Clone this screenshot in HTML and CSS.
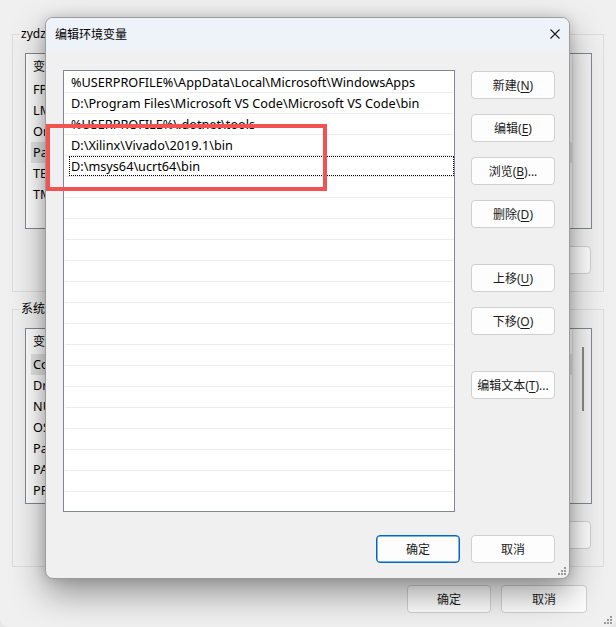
FILE: index.html
```html
<!DOCTYPE html>
<html lang="zh-CN">
<head>
    <meta charset="UTF-8">
    <title>环境变量</title>
    <link rel="stylesheet" href="styles.css">
</head>
<body>
    <div class="window">
        <fieldset class="group">
            <legend>zydz 的用户变量(<u>U</u>)</legend>
            <div class="var-list">
                <div class="var-body">
                    <div class="var-head"><span class="col-name">变量</span><span class="col-value">值</span></div>
                    <div class="var-row"><span class="col-name">FPGA_HOME</span><span class="col-value">D:\Xilinx</span></div>
                    <div class="var-row"><span class="col-name">LM_LICENSE_FILE</span><span class="col-value">D:\Xilinx\license.lic</span></div>
                    <div class="var-row"><span class="col-name">OneDrive</span><span class="col-value">C:\Users\zydz\OneDrive</span></div>
                    <div class="var-row selected"><span class="col-name">Path</span><span class="col-value">%USERPROFILE%\AppData\Local\Microsoft\WindowsApps;D:\Program Files</span></div>
                    <div class="var-row"><span class="col-name">TEMP</span><span class="col-value">%USERPROFILE%\AppData\Local\Temp</span></div>
                    <div class="var-row"><span class="col-name">TMP</span><span class="col-value">%USERPROFILE%\AppData\Local\Temp</span></div>
                </div>
                <div class="scrollbar"></div>
            </div>
            <div class="group-buttons">
                <button class="btn">新建(<u>N</u>)...</button>
                <button class="btn">编辑(<u>E</u>)...</button>
                <button class="btn">删除(<u>D</u>)</button>
            </div>
        </fieldset>

        <fieldset class="group group-system">
            <legend>系统变量(<u>S</u>)</legend>
            <div class="var-list">
                <div class="var-body">
                    <div class="var-head"><span class="col-name">变量</span><span class="col-value">值</span></div>
                    <div class="var-row selected"><span class="col-name">ComSpec</span><span class="col-value">C:\Windows\system32\cmd.exe</span></div>
                    <div class="var-row"><span class="col-name">DriverData</span><span class="col-value">C:\Windows\System32\Drivers\DriverData</span></div>
                    <div class="var-row"><span class="col-name">NUMBER_OF_PROCESSORS</span><span class="col-value">16</span></div>
                    <div class="var-row"><span class="col-name">OS</span><span class="col-value">Windows_NT</span></div>
                    <div class="var-row"><span class="col-name">Path</span><span class="col-value">C:\Windows\system32;C:\Windows;</span></div>
                    <div class="var-row"><span class="col-name">PATHEXT</span><span class="col-value">.COM;.EXE;.BAT;.CMD;.VBS;.VBE;.JS</span></div>
                    <div class="var-row"><span class="col-name">PROCESSOR_ARCHITECTURE</span><span class="col-value">AMD64</span></div>
                </div>
                <div class="scrollbar"><div class="thumb"></div></div>
            </div>
            <div class="group-buttons">
                <button class="btn">新建(<u>W</u>)...</button>
                <button class="btn">编辑(<u>I</u>)...</button>
                <button class="btn">删除(<u>L</u>)</button>
            </div>
        </fieldset>

        <div class="window-buttons">
            <button class="btn">确定</button>
            <button class="btn btn-wide">取消</button>
        </div>
        <svg class="grip grip-window" width="9" height="9" viewBox="0 0 9 9">
            <rect x="6" y="0" width="2" height="2"/>
            <rect x="3" y="3" width="2" height="2"/><rect x="6" y="3" width="2" height="2"/>
            <rect x="0" y="6" width="2" height="2"/><rect x="3" y="6" width="2" height="2"/><rect x="6" y="6" width="2" height="2"/>
        </svg>

        <div class="dialog">
            <div class="dialog-title">
                <span>编辑环境变量</span>
                <svg class="close-icon" width="10" height="10" viewBox="0 0 10 10">
                    <path d="M0.5 0.5 L9.5 9.5 M9.5 0.5 L0.5 9.5" stroke="#1a1a1a" stroke-width="1.1" fill="none"/>
                </svg>
            </div>
            <div class="dialog-body">
                <div class="path-list">
                    <div class="path-row"><div class="path-cell">%USERPROFILE%\AppData\Local\Microsoft\WindowsApps</div></div>
                    <div class="path-row"><div class="path-cell">D:\Program Files\Microsoft VS Code\Microsoft VS Code\bin</div></div>
                    <div class="path-row"><div class="path-cell">%USERPROFILE%\.dotnet\tools</div></div>
                    <div class="path-row"><div class="path-cell">D:\Xilinx\Vivado\2019.1\bin</div></div>
                    <div class="path-row"><div class="path-cell focused">D:\msys64\ucrt64\bin</div></div>
                    <div class="path-row"></div>
                    <div class="path-row"></div>
                    <div class="path-row"></div>
                    <div class="path-row"></div>
                    <div class="path-row"></div>
                    <div class="path-row"></div>
                    <div class="path-row"></div>
                    <div class="path-row"></div>
                    <div class="path-row"></div>
                    <div class="path-row"></div>
                    <div class="path-row"></div>
                    <div class="path-row"></div>
                    <div class="path-row"></div>
                    <div class="path-row"></div>
                    <div class="path-row"></div>
                    <div class="path-row"></div>
                </div>
                <div class="side-buttons">
                    <button class="btn">新建(<u>N</u>)</button>
                    <button class="btn">编辑(<u>E</u>)</button>
                    <button class="btn">浏览(<u>B</u>)...</button>
                    <button class="btn">删除(<u>D</u>)</button>
                    <button class="btn spaced">上移(<u>U</u>)</button>
                    <button class="btn">下移(<u>O</u>)</button>
                    <button class="btn spaced">编辑文本(<u>T</u>)...</button>
                </div>
            </div>
            <div class="dialog-footer">
                <button class="btn btn-default">确定</button>
                <button class="btn">取消</button>
            </div>
            <svg class="grip grip-dialog" width="9" height="9" viewBox="0 0 9 9">
                <rect x="6" y="0" width="2" height="2"/>
                <rect x="3" y="3" width="2" height="2"/><rect x="6" y="3" width="2" height="2"/>
                <rect x="0" y="6" width="2" height="2"/><rect x="3" y="6" width="2" height="2"/><rect x="6" y="6" width="2" height="2"/>
            </svg>
        </div>

        <div class="highlight-box"></div>
    </div>
</body>
</html>
```

FILE: styles.css
```css
* {
    box-sizing: border-box;
    margin: 0;
    padding: 0;
}

body {
    font-family: "Noto Sans", "Noto Sans CJK SC", sans-serif;
    font-size: 12px;
    color: #000;
    background: #e6e6e6;
    overflow: hidden;
}

.window {
    position: relative;
    width: 616px;
    height: 627px;
    background: #f0f0f0;
    padding: 26px 12px 0 12px;
    border-radius: 0 0 8px 8px;
}

/* background window: group boxes */
.group {
    border: 1px solid #dcdcdc;
    width: 592px;
    min-width: 0;
    padding: 11px 11px 17px 12px;
}

.group legend {
    line-height: 16px;
    padding: 0 2px;
    margin-left: -6px;
}

.group-system {
    margin-top: 9px;
}

.var-list {
    display: flex;
    height: 176px;
    border: 1px solid #828790;
    background: #fff;
    overflow: hidden;
}

.var-body {
    flex: 1;
    min-width: 0;
    overflow: hidden;
    padding-left: 5px;
}

.var-head,
.var-row {
    display: flex;
    white-space: nowrap;
    padding-left: 2px;
}

.var-head {
    height: 25px;
    line-height: 25px;
}

.var-row {
    height: 21px;
    line-height: 21px;
    font-size: 12.7px;
}

.var-row.selected {
    background: #e5e5e5;
}

.col-name {
    width: 200px;
    flex-shrink: 0;
}

.col-value {
    width: 320px;
    flex-shrink: 0;
    overflow: hidden;
    text-overflow: ellipsis;
}

.scrollbar {
    width: 19px;
    flex-shrink: 0;
    border-left: 1px solid #e4e4e4;
    background: #f4f4f4;
    padding: 18px 0 0 9px;
}

.thumb {
    width: 2px;
    height: 64px;
    background: #8a8a8a;
}

.group-buttons {
    display: flex;
    justify-content: flex-end;
    gap: 10px;
    margin-top: 17px;
    padding-right: 1px;
}

/* buttons */
.btn {
    width: 84px;
    height: 28px;
    border: 1px solid #d0d0d0;
    border-radius: 4px;
    background: #fdfdfd;
    font-family: inherit;
    font-size: 12px;
    color: #1b1b1b;
}

.btn u {
    text-underline-offset: 2px;
}

.btn-wide {
    width: 86px;
}

.window-buttons {
    display: flex;
    justify-content: flex-end;
    gap: 10px;
    margin-top: 18px;
    margin-right: 17px;
}

.grip {
    position: absolute;
    fill: #9a9a9a;
}

.grip-window {
    right: 3px;
    bottom: 2px;
}

/* dialog */
.dialog {
    position: absolute;
    left: 45px;
    top: 17px;
    width: 525px;
    height: 562px;
    background: #f0f0f0;
    border: 1px solid #9c9c9c;
    border-radius: 8px;
    box-shadow: 0 14px 34px rgba(0, 0, 0, 0.4), 0 0 12px rgba(0, 0, 0, 0.14);
    overflow: hidden;
}

.dialog-title {
    height: 31px;
    background: #eef2f9;
    display: flex;
    align-items: center;
    justify-content: space-between;
    padding: 0 9px;
}

.dialog-body {
    display: flex;
    gap: 16px;
    padding: 21px 14px 0 17px;
}

.path-list {
    width: 392px;
    height: 442px;
    border: 1px solid #828790;
    background: #fff;
    padding-top: 1px;
    overflow: hidden;
}

.path-row {
    height: 21px;
    margin-left: 1px;
    border-bottom: 1px solid #ececec;
    padding-left: 4px;
}

.path-cell {
    height: 20px;
    line-height: 18px;
    font-size: 12.7px;
    border: 1px solid transparent;
    padding-left: 1px;
    white-space: nowrap;
}

.path-cell.focused {
    border: 1px dotted #000;
}

.side-buttons {
    display: flex;
    flex-direction: column;
    gap: 15px;
    padding-top: 1px;
}

.side-buttons .spaced {
    margin-top: 21px;
}

.dialog-footer {
    display: flex;
    justify-content: flex-end;
    gap: 11px;
    margin-top: 23px;
    padding-right: 14px;
}

.btn-default {
    border-color: #0067c0;
    box-shadow: inset 0 0 0 0.5px #0067c0;
}

.grip-dialog {
    right: 2px;
    bottom: 2px;
}

/* red annotation frame */
.highlight-box {
    position: absolute;
    left: 46px;
    top: 124px;
    width: 281px;
    height: 67px;
    border: 4px solid #f25252;
}
```
